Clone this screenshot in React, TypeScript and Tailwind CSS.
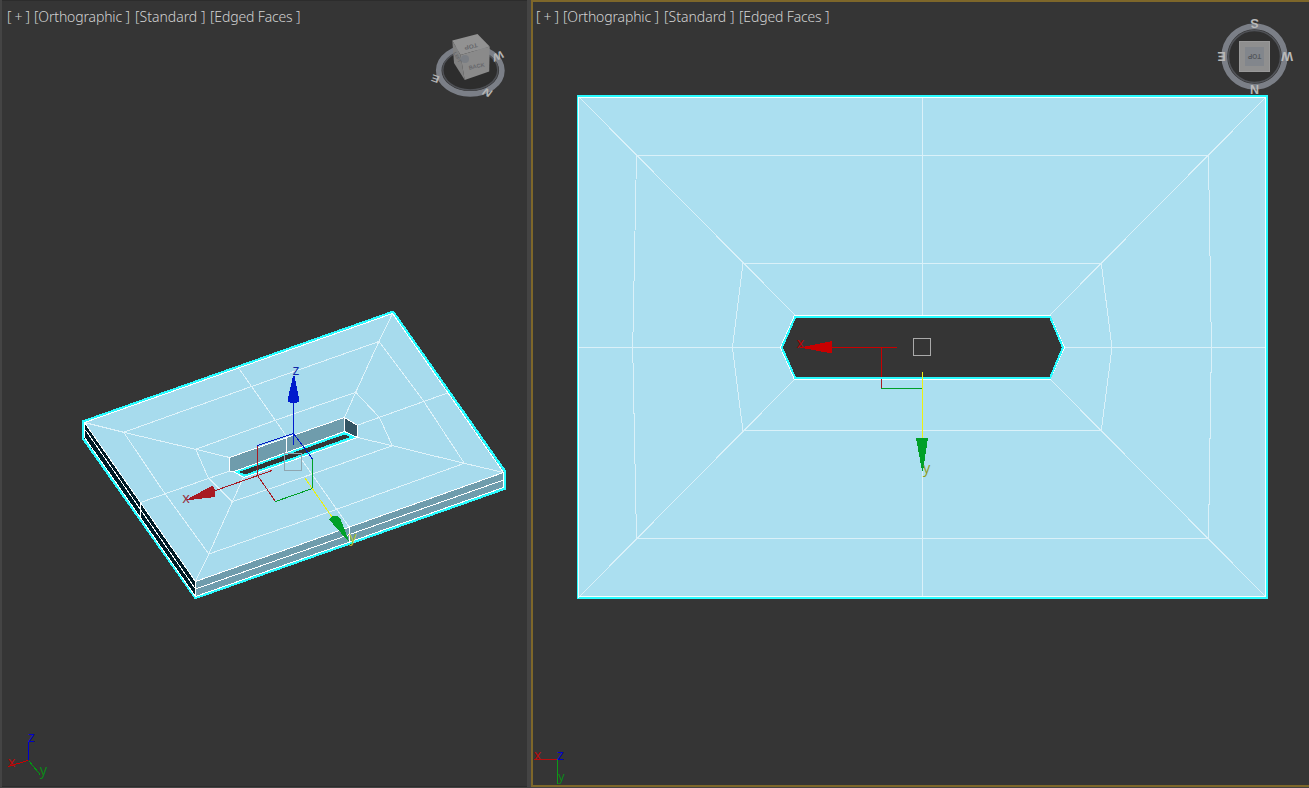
import React from 'react';

type Pt = [number, number];

const pts = (list: Pt[]) => list.map((p) => p.join(',')).join(' ');

function ViewportLabel() {
  return (
    <div className="absolute left-[5px] top-[7px] flex h-5 items-center whitespace-nowrap font-['Noto_Sans',sans-serif] text-[14px] font-light leading-5 text-[#d2d2d2]">
      <span className="w-[27px] tracking-[-0.3px]">[ + ]</span>
      <span className="w-[101px] tracking-[-0.15px]">[Orthographic ]</span>
      <span className="w-[75px]">[Standard ]</span>
      <span className="tracking-[-0.15px]">[Edged Faces ]</span>
    </div>
  );
}

const letter = "font-['Open_Sans',sans-serif]";

function PerspectiveCube() {
  return (
    <g>
      <ellipse cx="470.3" cy="70.5" rx="28" ry="20.5" fill="#2d2d2d" />
      <ellipse cx="470.3" cy="70.5" rx="31.6" ry="23.4" fill="none" stroke="#7b7f87" strokeWidth="5.6" />
      <ellipse cx="470.3" cy="70" rx="27.5" ry="20" fill="none" stroke="#4e5055" strokeWidth="1.5" />
      <polygon points="452.3,40.5 477.5,34 489.7,46.5 460.5,55" fill="#929292" />
      <polygon points="452.3,40.5 460.5,55 464.7,80 454,63" fill="#818181" />
      <polygon points="460.5,55 489.7,46.5 489.2,71.5 464.7,80" fill="#8a8a8a" />
      <circle cx="465" cy="59" r="4" fill="#7a7e84" />
      <g className="font-['Liberation_Sans',sans-serif]" fontWeight="700" fill="#66676a" textAnchor="middle">
        <text fontSize="6.5" transform="translate(470.5 44.5) rotate(167) scale(1 .9)">TOP</text>
        <text fontSize="5.5" transform="translate(477 68) rotate(-12)">BACK</text>
        <text fontSize="4.5" transform="translate(456 58) rotate(62)">LEFT</text>
      </g>
      <g className="font-['Liberation_Sans',sans-serif]" fontWeight="700" fill="#b4b4b4" textAnchor="middle" fontSize="12">
        <text transform="translate(436.5 75.5) rotate(200) scale(1 .85)">E</text>
        <text transform="translate(485 95.5) rotate(22) skewX(-15) scale(1 .9)">N</text>
        <text transform="translate(497 52.5) rotate(155) skewX(-10) scale(1 .9)">W</text>
      </g>
    </g>
  );
}

function TopCube() {
  return (
    <g>
      <circle cx="1254.5" cy="56.5" r="27" fill="#2f2f2f" />
      <circle cx="1254.5" cy="56.5" r="30.2" fill="none" stroke="#7b7f87" strokeWidth="5.8" />
      <circle cx="1254.5" cy="56.5" r="26" fill="none" stroke="#505257" strokeWidth="1.5" />
      <rect x="1239" y="41" width="31" height="31" fill="#8f8f8f" />
      <rect x="1239.5" y="41.5" width="30" height="30" fill="none" stroke="#999" />
      <rect x="1245" y="47" width="19" height="19" fill="#82868c" />
      <g className="font-['Liberation_Sans',sans-serif]" fontWeight="700" textAnchor="middle">
        <text fontSize="6.5" fill="#55585c" transform="translate(1254.5 54) rotate(180)">TOP</text>
        <g fontSize="12.5" fill="#b9b9b9">
          <text transform="translate(1254.5 19) rotate(180)">S</text>
          <text transform="translate(1254.5 84.5) rotate(180)">N</text>
          <text transform="translate(1221.5 51.5) rotate(180)">E</text>
          <text transform="translate(1287 51.5) rotate(180)">W</text>
        </g>
      </g>
    </g>
  );
}

const slab = {
  outline: [[83, 421.5], [391.5, 312.3], [393.5, 312.3], [505, 471.2], [505, 488.7], [195.5, 598], [83, 438.5]] as Pt[],
  top: [[84.5, 422.5], [392.5, 313.5], [503.5, 472.5], [195.5, 581.5]] as Pt[],
  outerRing: [[123.7, 432.3], [251, 386.7], [378.9, 341.5], [423.3, 400.7], [464.3, 463.3], [336.7, 509.3], [208.8, 554], [164, 492.3]] as Pt[],
  innerRing: [[195.7, 449.3], [274.7, 420.5], [355.7, 392.3], [379.3, 417.3], [392.3, 445.7], [316.7, 472.5], [232.4, 501.7], [208.3, 478]] as Pt[],
};

function PerspectiveScene() {
  return (
    <svg className="absolute inset-0" width="525" height="784" viewBox="2 0 525 784">
      <g shapeRendering="crispEdges" fill="none">
        <polygon points={pts(slab.outline)} fill="#6f9cac" />
        <polygon points="84,422 196,582 196,598 84,438" fill="#001b26" />
        <polygon points={pts(slab.top)} fill="#a7dbed" />

        <g stroke="#dff3fa" strokeWidth="1">
          <polygon points={pts(slab.outerRing)} />
          <polygon points={pts(slab.innerRing)} />
          <polyline points="84.5,422.5 123.7,432.3 195.7,449.3 229.5,457.5" />
          <polyline points="392.5,313.5 378.9,341.5 355.7,392.3 344.5,417.5" />
          <polyline points="503.5,472.5 464.3,463.3 392.3,445.7 357.5,437.5" />
          <polyline points="195.5,581.5 208.8,554 232.4,501.7 243.3,477.5" />
          <line x1="140.5" y1="502.5" x2="229.5" y2="471" />
          <line x1="447.5" y1="393" x2="358" y2="425" />
          <line x1="239.3" y1="369" x2="286.7" y2="436.5" />
          <line x1="300.5" y1="458" x2="349.5" y2="527.5" />
        </g>

        <polygon points="229.5,457.5 344.5,417.5 344.5,432 234,471.5 229.5,471.5" fill="#6f9cac" />
        <polygon points="344.5,417.5 357.5,425.5 357.5,438 344.5,431" fill="#335463" />
        <polygon points="236,471.8 344.5,433.3 353,437.2 245,475.7" fill="#353535" stroke="#28fbff" strokeWidth="2.2" />
        <g stroke="#ffffff" strokeWidth="1">
          <polyline points="229.5,471 229.5,457.5 344.5,417.5 357.5,425.5 357.5,438" />
          <line x1="344.5" y1="417.5" x2="344.5" y2="431" />
          <polyline points="229.5,471 234,471.5 344.5,431.5 357.5,437.5 244,477.5 234,472" />
          <line x1="286.5" y1="437" x2="286.5" y2="452" />
        </g>

        <polygon points={pts(slab.outline)} stroke="#28fbff" strokeWidth="2.3" />
        <g stroke="#ffffff" strokeWidth="1">
          <polygon points={pts(slab.top)} />
          <polyline points="85.5,430 195.5,589 503.5,480" />
          <polyline points="84.5,423 84.5,437.5 195.5,596.5 503.5,487.5 503.5,473" />
          <line x1="195.5" y1="582" x2="195.5" y2="597" />
          <line x1="140.5" y1="502.5" x2="140.5" y2="517" />
          <line x1="349.5" y1="527.5" x2="349.5" y2="542" />
        </g>

        <rect x="284.5" y="453.5" width="17" height="17" stroke="#8fa6b0" />
        <g stroke="#a81a22">
          <polyline points="257.5,446 257.5,475.5 275.5,501.5" />
          <line x1="214" y1="491" x2="272" y2="470.5" />
        </g>
        <polyline points="275.5,501.5 312.5,488.5 312.5,459" stroke="#00a028" />
        <polyline points="257.5,445.5 293.5,433.5 312.5,459" stroke="#0018c4" />
        <line x1="293.5" y1="400" x2="293.5" y2="445" stroke="#001ccc" />
        <line x1="305" y1="478" x2="332" y2="517" stroke="#e8f010" />
        <polygon points="293,376 294.5,376 299,398 298.7,401.5 296,403 291,403 288.3,401.5 288,398" fill="#001ccc" />
        <polygon points="185,500.5 212.5,485.5 215,489.5 215,497" fill="#a81a22" />
        <polygon points="329,519.5 332,516.5 337,516 340.5,519 349.5,542.5" fill="#00a028" />
      </g>
      <g className={letter} fontSize="14.5" textAnchor="middle">
        <text x="186" y="502.5" fill="#98303c">x</text>
        <text x="295.8" y="374.5" fill="#1028a8">z</text>
        <text x="353" y="542" fill="#b4c428">y</text>
      </g>

      <g shapeRendering="crispEdges">
        <line x1="28.5" y1="742" x2="28.5" y2="760" stroke="#0000cc" />
        <line x1="8" y1="766.5" x2="28" y2="760.5" stroke="#cc0000" />
        <line x1="29" y1="761" x2="40" y2="774.5" stroke="#009a10" />
      </g>
      <g className={letter} fontSize="14.5" textAnchor="middle">
        <text x="31.5" y="742" fill="#0000cc">z</text>
        <text x="11.5" y="767" fill="#b80c0c">x</text>
        <text x="43.5" y="774.5" fill="#0c8a18">y</text>
      </g>
      <PerspectiveCube />
    </svg>
  );
}

function TopScene() {
  return (
    <svg className="absolute inset-0" width="776" height="783" viewBox="533 2 776 783">
      <TopCube />
      <g shapeRendering="crispEdges" fill="none">
        <path
          d="M578 96H1267V598H578ZM795 316.5L781.5 347.5L795 378.5H1050L1063 347.5L1050 316.5Z"
          fill="#abdff0"
          fillRule="evenodd"
        />
        <g stroke="#daf1f9" strokeWidth="1">
          <polygon points="636.5,155.5 1208.5,155.5 1211.4,347.5 1208.5,538.5 636.5,538.5 632.7,347.5" />
          <polygon points="742.9,263.5 1101.3,263.5 1112,347.5 1101.3,430.5 742.9,430.5 732.4,347.5" />
          <path d="M579 97L795 315M1266 97L1050 315M579 597L795 379M1266 597L1050 379" />
          <path d="M578 347.5H781M1063 347.5H1267M922.5 97V316M922.5 379V597" />
        </g>
        <rect x="578" y="96" width="689" height="502" stroke="#28fbff" strokeWidth="2" />
        <path d="M578.5 597.5V97.5H1265.5V596.5H579" stroke="#f2ffff" />
        <polygon points="794.5,315.5 780.3,347.5 794.5,379.5 1050,379.5 1064.5,347.5 1050,315.5" stroke="#ffffff" />
        <polygon points="795.3,317 781.8,347.5 795.3,378 1050,378 1063,347.5 1050,317" stroke="#28fbff" strokeWidth="2" />

        <rect x="913.5" y="338.5" width="17" height="17" stroke="#aaaaaa" />
        <path d="M831 347.5H897M881.5 347V377" stroke="#c80000" />
        <path d="M881.5 379V389" stroke="#a81a22" />
        <path d="M881 388.5H922" stroke="#00a028" />
        <path d="M922.5 372V438" stroke="#eef210" />
        <polygon points="800,347.5 832,341 832,353.5" fill="#c80000" />
        <polygon points="916,438 928,438 923,471 922,471" fill="#00a028" />
      </g>
      <g className={letter} fontSize="14.5" textAnchor="middle">
        <text x="800.5" y="347.5" fill="#b80000">x</text>
        <text x="926.7" y="472.5" fill="#8f9c20">y</text>
      </g>

      <g shapeRendering="crispEdges">
        <line x1="534" y1="759.5" x2="557" y2="759.5" stroke="#b80c0c" />
        <line x1="557.5" y1="759" x2="557.5" y2="784" stroke="#0c9a18" />
      </g>
      <g className={letter} fontSize="14.5" textAnchor="middle">
        <text x="537.5" y="760" fill="#b80c0c">x</text>
        <text x="560.5" y="760" fill="#0000cc">z</text>
        <text x="561.5" y="781" fontSize="12.5" fill="#0c8a18">y</text>
      </g>
    </svg>
  );
}

export default function App() {
  return (
    <main className="flex h-[788px] w-[1309px] overflow-hidden bg-[#444444]">
      <section className="relative ml-[2px] h-[787px] w-[525px] shrink-0 border-y border-[#2c2c2c] bg-[#353535]">
        <div className="absolute -top-px left-0 h-[784px] w-[525px]">
          <PerspectiveScene />
        </div>
        <div className="absolute -top-px left-0">
          <ViewportLabel />
        </div>
      </section>
      <section className="relative ml-[4px] h-[787px] w-[778px] shrink-0 border-y-2 border-l-2 border-[#7e672a] bg-[#353535]">
        <TopScene />
        <div className="absolute -left-[2px] -top-[2px]">
          <ViewportLabel />
        </div>
      </section>
    </main>
  );
}
